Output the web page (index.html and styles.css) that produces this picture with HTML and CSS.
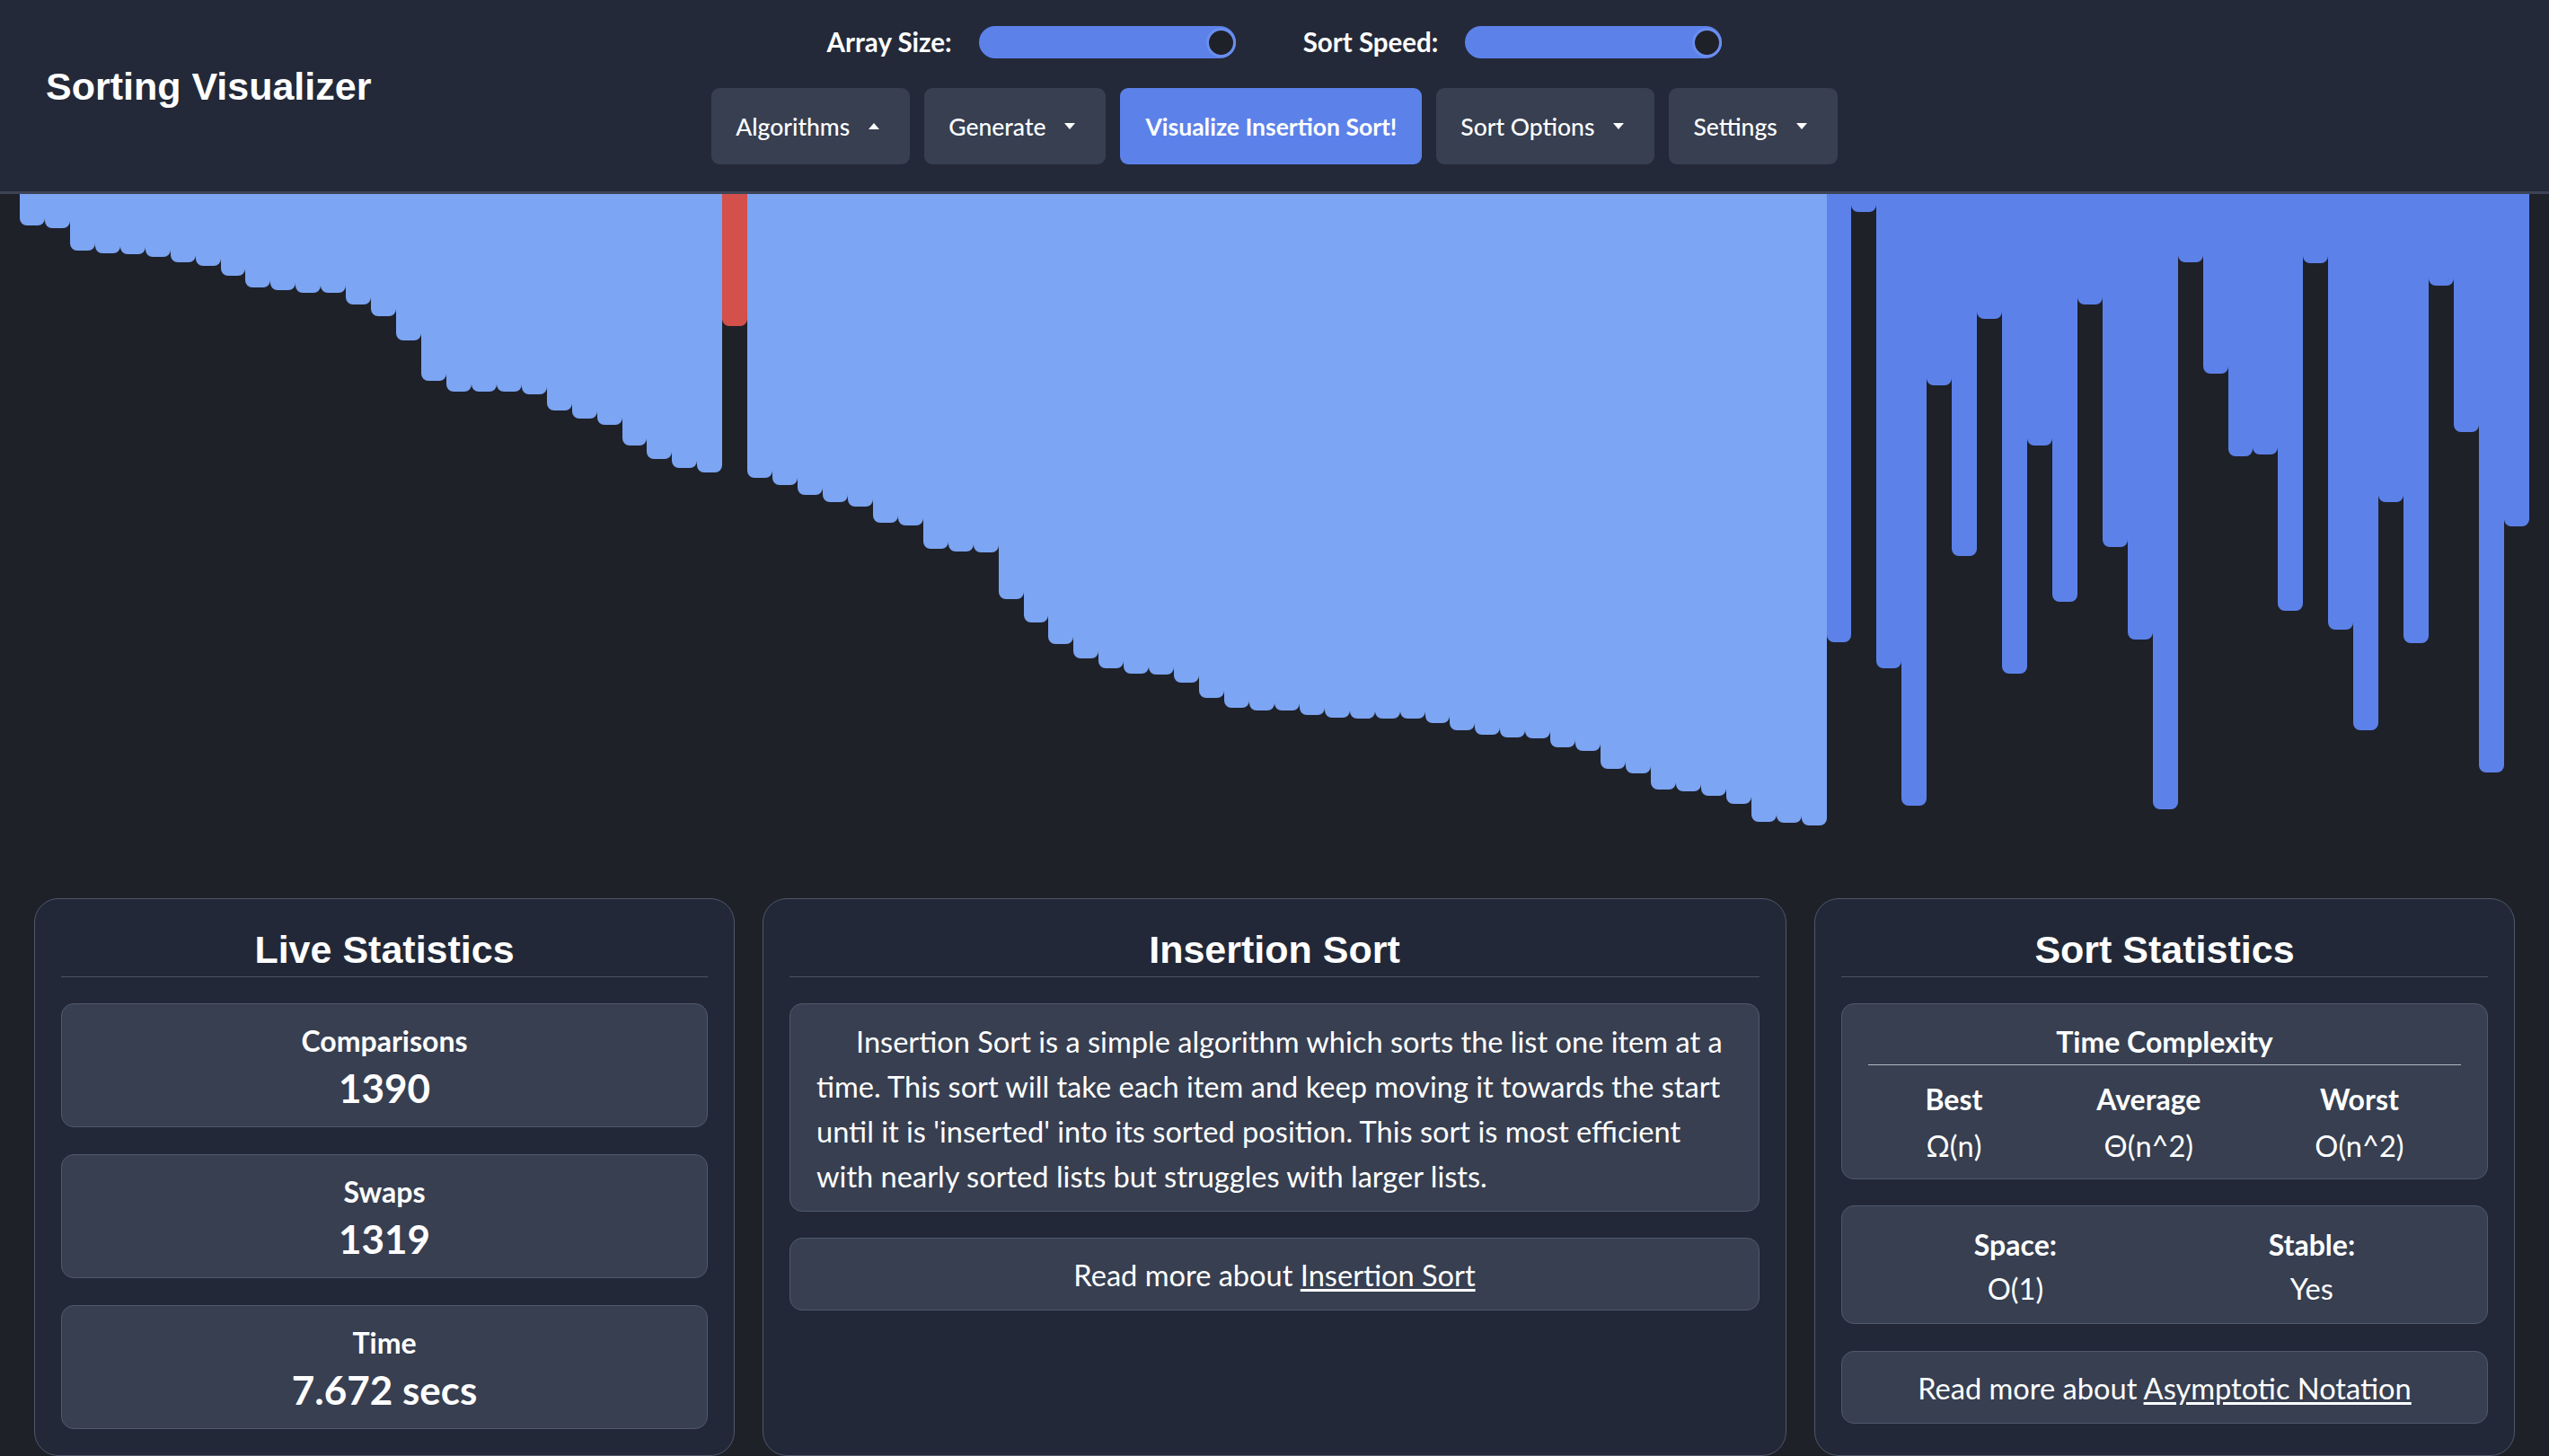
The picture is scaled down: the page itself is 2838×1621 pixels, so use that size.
FILE: index.html
```html
<!DOCTYPE html>
<html lang="en">
<head>
<meta charset="utf-8">
<title>Sorting Visualizer</title>
<link rel="stylesheet" href="styles.css">
</head>
<body>
<header class="topbar">
  <h1 class="brand">Sorting Visualizer</h1>
  <div class="controls">
    <div class="sliders">
      <div class="slider-group">
        <span class="slider-label">Array Size:</span>
        <div class="slider slider-size"><span class="thumb"></span></div>
      </div>
      <div class="slider-group">
        <span class="slider-label">Sort Speed:</span>
        <div class="slider slider-speed"><span class="thumb"></span></div>
      </div>
    </div>
    <div class="buttons">
      <button class="btn btn-algo">Algorithms<span class="caret caret-up"></span></button>
      <button class="btn btn-gen">Generate<span class="caret"></span></button>
      <button class="btn btn-primary">Visualize Insertion Sort!</button>
      <button class="btn btn-opts">Sort Options<span class="caret"></span></button>
      <button class="btn btn-set">Settings<span class="caret"></span></button>
    </div>
  </div>
  <div class="spacer"></div>
</header>

<section class="bars">
  <div class="bar" style="height:35px"></div>
  <div class="bar" style="height:38px"></div>
  <div class="bar" style="height:63px"></div>
  <div class="bar" style="height:66px"></div>
  <div class="bar" style="height:67px"></div>
  <div class="bar" style="height:70px"></div>
  <div class="bar" style="height:76px"></div>
  <div class="bar" style="height:80px"></div>
  <div class="bar" style="height:91px"></div>
  <div class="bar" style="height:104px"></div>
  <div class="bar" style="height:107px"></div>
  <div class="bar" style="height:110px"></div>
  <div class="bar" style="height:110px"></div>
  <div class="bar" style="height:123px"></div>
  <div class="bar" style="height:136px"></div>
  <div class="bar" style="height:163px"></div>
  <div class="bar" style="height:208px"></div>
  <div class="bar" style="height:220px"></div>
  <div class="bar" style="height:220px"></div>
  <div class="bar" style="height:220px"></div>
  <div class="bar" style="height:223px"></div>
  <div class="bar" style="height:241px"></div>
  <div class="bar" style="height:250px"></div>
  <div class="bar" style="height:257px"></div>
  <div class="bar" style="height:280px"></div>
  <div class="bar" style="height:295px"></div>
  <div class="bar" style="height:305px"></div>
  <div class="bar" style="height:310px"></div>
  <div class="bar bar-active" style="height:147px"></div>
  <div class="bar" style="height:316px"></div>
  <div class="bar" style="height:324px"></div>
  <div class="bar" style="height:335px"></div>
  <div class="bar" style="height:343px"></div>
  <div class="bar" style="height:348px"></div>
  <div class="bar" style="height:366px"></div>
  <div class="bar" style="height:369px"></div>
  <div class="bar" style="height:395px"></div>
  <div class="bar" style="height:398px"></div>
  <div class="bar" style="height:399px"></div>
  <div class="bar" style="height:451px"></div>
  <div class="bar" style="height:477px"></div>
  <div class="bar" style="height:501px"></div>
  <div class="bar" style="height:517px"></div>
  <div class="bar" style="height:528px"></div>
  <div class="bar" style="height:534px"></div>
  <div class="bar" style="height:535px"></div>
  <div class="bar" style="height:544px"></div>
  <div class="bar" style="height:561px"></div>
  <div class="bar" style="height:572px"></div>
  <div class="bar" style="height:575px"></div>
  <div class="bar" style="height:575px"></div>
  <div class="bar" style="height:580px"></div>
  <div class="bar" style="height:583px"></div>
  <div class="bar" style="height:584px"></div>
  <div class="bar" style="height:584px"></div>
  <div class="bar" style="height:584px"></div>
  <div class="bar" style="height:589px"></div>
  <div class="bar" style="height:597px"></div>
  <div class="bar" style="height:602px"></div>
  <div class="bar" style="height:605px"></div>
  <div class="bar" style="height:606px"></div>
  <div class="bar" style="height:616px"></div>
  <div class="bar" style="height:620px"></div>
  <div class="bar" style="height:640px"></div>
  <div class="bar" style="height:645px"></div>
  <div class="bar" style="height:663px"></div>
  <div class="bar" style="height:665px"></div>
  <div class="bar" style="height:670px"></div>
  <div class="bar" style="height:679px"></div>
  <div class="bar" style="height:699px"></div>
  <div class="bar" style="height:700px"></div>
  <div class="bar" style="height:703px"></div>
  <div class="bar bar-unsorted" style="height:499px"></div>
  <div class="bar bar-unsorted" style="height:20px"></div>
  <div class="bar bar-unsorted" style="height:528px"></div>
  <div class="bar bar-unsorted" style="height:681px"></div>
  <div class="bar bar-unsorted" style="height:213px"></div>
  <div class="bar bar-unsorted" style="height:403px"></div>
  <div class="bar bar-unsorted" style="height:139px"></div>
  <div class="bar bar-unsorted" style="height:534px"></div>
  <div class="bar bar-unsorted" style="height:280px"></div>
  <div class="bar bar-unsorted" style="height:454px"></div>
  <div class="bar bar-unsorted" style="height:123px"></div>
  <div class="bar bar-unsorted" style="height:393px"></div>
  <div class="bar bar-unsorted" style="height:496px"></div>
  <div class="bar bar-unsorted" style="height:685px"></div>
  <div class="bar bar-unsorted" style="height:76px"></div>
  <div class="bar bar-unsorted" style="height:200px"></div>
  <div class="bar bar-unsorted" style="height:292px"></div>
  <div class="bar bar-unsorted" style="height:290px"></div>
  <div class="bar bar-unsorted" style="height:464px"></div>
  <div class="bar bar-unsorted" style="height:77px"></div>
  <div class="bar bar-unsorted" style="height:485px"></div>
  <div class="bar bar-unsorted" style="height:597px"></div>
  <div class="bar bar-unsorted" style="height:343px"></div>
  <div class="bar bar-unsorted" style="height:500px"></div>
  <div class="bar bar-unsorted" style="height:102px"></div>
  <div class="bar bar-unsorted" style="height:265px"></div>
  <div class="bar bar-unsorted" style="height:644px"></div>
  <div class="bar bar-unsorted" style="height:370px"></div>
</section>

<section class="stats">
  <div class="card">
    <h2 class="card-title">Live Statistics</h2>
    <div class="stat-list">
      <div class="box stat-box">
        <div class="stat-label">Comparisons</div>
        <div class="stat-value">1390</div>
      </div>
      <div class="box stat-box">
        <div class="stat-label">Swaps</div>
        <div class="stat-value">1319</div>
      </div>
      <div class="box stat-box">
        <div class="stat-label">Time</div>
        <div class="stat-value">7.672 secs</div>
      </div>
    </div>
  </div>

  <div class="card">
    <h2 class="card-title">Insertion Sort</h2>
    <div class="box desc-box">
      <p class="desc">Insertion Sort is a simple algorithm which sorts the list one item at a time. This sort will take each item and keep moving it towards the start until it is 'inserted' into its sorted position. This sort is most efficient with nearly sorted lists but struggles with larger lists.</p>
    </div>
    <div class="box link-box">Read more about <a href="#" class="link">Insertion Sort</a></div>
  </div>

  <div class="card">
    <h2 class="card-title">Sort Statistics</h2>
    <div class="box tc-box">
      <div class="tc-title">Time Complexity</div>
      <div class="cols tc-cols">
        <div class="col"><div class="col-label">Best</div><div class="col-value">Ω(n)</div></div>
        <div class="col"><div class="col-label">Average</div><div class="col-value">Θ(n^2)</div></div>
        <div class="col"><div class="col-label">Worst</div><div class="col-value">O(n^2)</div></div>
      </div>
    </div>
    <div class="box space-box">
      <div class="cols">
        <div class="col"><div class="col-label">Space:</div><div class="col-value col-value-gap">O(1)</div></div>
        <div class="col"><div class="col-label">Stable:</div><div class="col-value col-value-gap">Yes</div></div>
      </div>
    </div>
    <div class="box link-box link-box-right">Read more about <a href="#" class="link">Asymptotic Notation</a></div>
  </div>
</section>
</body>
</html>
```

FILE: styles.css
```css
html, body {
  margin: 0;
  padding: 0;
  background: #1f2129;
  color: #ffffff;
  font-family: "Lato", "Noto Sans", sans-serif;
}

body {
  height: 1621px;
  overflow: hidden;
}

/* ---------- header ---------- */
.topbar {
  display: grid;
  grid-template-columns: 1fr auto 1fr;
  background: #232938;
  border-bottom: 3px solid #3c4356;
  padding: 29px 0 30px;
}

.brand {
  margin: 43px 0 0 51px;
  align-self: start;
  font-family: "Liberation Sans", Arial, sans-serif;
  font-weight: 700;
  font-size: 43px;
  line-height: 49px;
  color: #ffffff;
}

.controls {
  display: flex;
  flex-direction: column;
  align-items: center;
}

.sliders {
  display: flex;
  align-items: center;
  gap: 75px;
  height: 36px;
}

.slider-group {
  display: flex;
  align-items: center;
  gap: 30px;
}

.slider-label {
  font-weight: 700;
  font-size: 29.5px;
  line-height: 36px;
}

.slider {
  width: 286px;
  height: 36px;
  border-radius: 18px;
  background: #5c82ea;
  display: flex;
  align-items: center;
  justify-content: flex-end;
}

.thumb {
  width: 33px;
  height: 33px;
  border-radius: 50%;
  box-sizing: border-box;
  background: #1f2129;
  border: 3px solid #6a8ef0;
}

.buttons {
  display: flex;
  gap: 16px;
  margin-top: 33px;
}

.btn {
  height: 85px;
  display: flex;
  align-items: center;
  padding: 0 34px 0 27px;
  border: none;
  border-radius: 9px;
  background: #373f51;
  color: #ffffff;
  font-family: "Lato", "Noto Sans", sans-serif;
  font-size: 26.5px;
  font-weight: 500;
}

.btn-primary {
  background: #5c82ea;
  font-weight: 700;
  padding: 0 28px;
}

.caret {
  display: inline-block;
  width: 0;
  height: 0;
  margin-left: 21px;
  border-left: 6px solid transparent;
  border-right: 6px solid transparent;
  border-top: 7px solid #ffffff;
}

.caret-up {
  border-top: none;
  border-bottom: 7px solid #ffffff;
}

/* ---------- bars ---------- */
.bars {
  display: flex;
  align-items: flex-start;
  height: 754px;
  padding: 0 22px;
}

.bar {
  flex: 1 1 0;
  background: #7ca5f3;
  border-radius: 0 0 8px 8px;
}

.bar-active {
  background: #d4504a;
}

.bar-unsorted {
  background: #5c82ea;
}

/* ---------- statistics cards ---------- */
.stats {
  display: grid;
  grid-template-columns: 780px 1fr 780px;
  gap: 31px;
  padding: 30px 38px 0;
}

.card {
  background: #222837;
  border: 1px solid #4f576a;
  border-radius: 27px;
  padding: 31px 29px 29px;
  height: 621px;
  box-sizing: border-box;
}

.card-title {
  margin: 0 0 29px;
  padding: 1px 0 5px;
  border-bottom: 1px solid #4b5365;
  text-align: center;
  font-family: "Liberation Sans", Arial, sans-serif;
  font-weight: 700;
  font-size: 43px;
  line-height: 49px;
  color: #ffffff;
}

.box {
  background: #373f51;
  border: 1px solid #50596c;
  border-radius: 14px;
  text-align: center;
}

.stat-list {
  display: flex;
  flex-direction: column;
  gap: 30px;
}

.stat-box {
  padding: 21px 20px 17px;
}

.stat-label {
  font-weight: 700;
  font-size: 32px;
  line-height: 40px;
}

.stat-value {
  margin-top: 6px;
  font-weight: 700;
  font-size: 44px;
  line-height: 52px;
}

.desc-box {
  padding: 17px 29px 13px;
  text-align: left;
}

.desc {
  margin: 0;
  font-size: 32.6px;
  line-height: 50px;
  text-indent: 44px;
}

.link-box {
  margin-top: 29px;
  padding: 16px 29px 13px;
  font-size: 32.6px;
  line-height: 50px;
}

.link-box-right {
  margin-top: 30px;
}

.link {
  color: #ffffff;
  text-decoration: underline;
  text-underline-offset: 3px;
}

.tc-box {
  padding: 22px 29px 16px;
}

.tc-title {
  font-weight: 700;
  font-size: 32px;
  line-height: 40px;
  padding-bottom: 5px;
  border-bottom: 1px solid #b3b9c4;
}

.cols {
  display: flex;
  justify-content: space-around;
}

.tc-cols {
  margin-top: 18px;
}

.col-label {
  font-weight: 700;
  font-size: 32px;
  line-height: 40px;
}

.col-value {
  margin-top: 12px;
  font-size: 32.6px;
  line-height: 40px;
}

.col-value-gap {
  margin-top: 9px;
}

.space-box {
  margin-top: 29px;
  padding: 23px 29px 18px;
}
```
